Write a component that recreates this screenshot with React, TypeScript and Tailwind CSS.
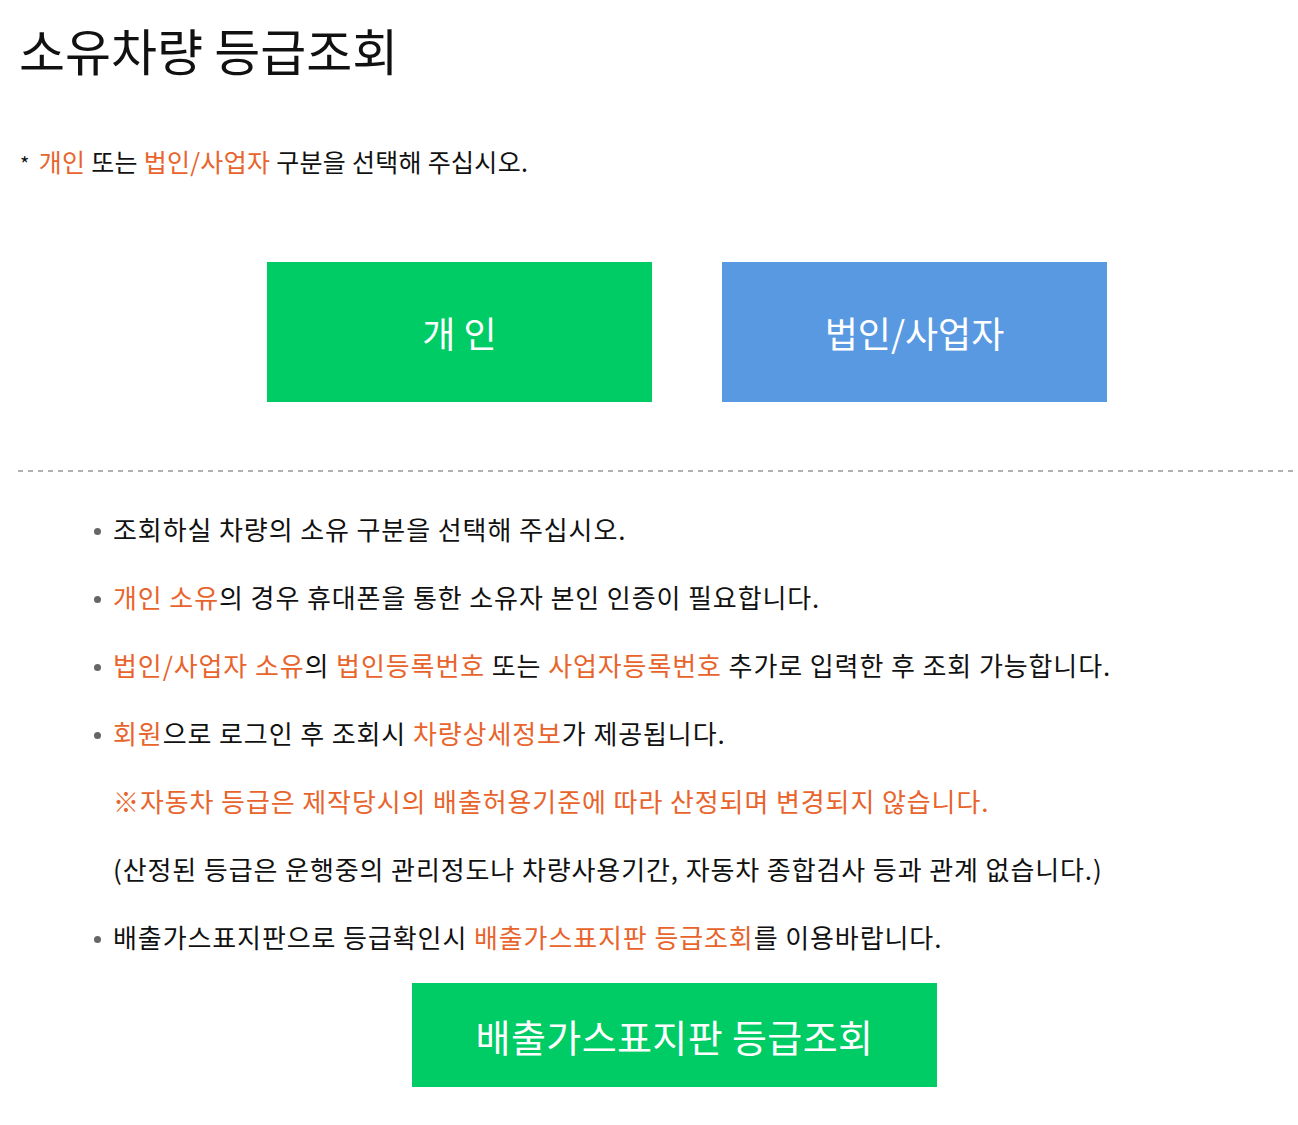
const orange = 'text-[#e8642c]'

function Bullet() {
  return <span className="inline-block w-[7px] h-[7px] rounded-full bg-[#666] mr-[12px] align-middle relative -top-[1px]" />
}

export default function App() {
  return (
    <div className="w-[1298px] min-h-[1125px] bg-white text-[#111] font-['Noto_Sans_CJK_KR','Noto_Sans',sans-serif]">
      {/* 제목 */}
      <h1 className="pl-[19px] pt-[15px] text-[50px] leading-[68px] font-normal">소유차량 등급조회</h1>

      <p className="pl-[20px] mt-[63px] text-[25px] leading-[30px] tracking-[0.3px]">
        <span className="text-[20px] mr-[9px]">*</span>
        <span className={orange}>개인</span> 또는 <span className={orange}>법인/사업자</span> 구분을 선택해 주십시오.
      </p>

      {/* 구분 선택 */}
      <div className="flex gap-[70px] pl-[267px] mt-[83px]">
        <button className="w-[385px] h-[140px] bg-[#00cc66] text-white text-[36px]">개 인</button>
        <button className="w-[385px] h-[140px] bg-[#5899e2] text-white text-[36px]">법인/사업자</button>
      </div>

      <div className="ml-[18px] mr-[4px] mt-[68px] h-[2px] bg-[repeating-linear-gradient(90deg,#b0b0b0_0_5px,transparent_5px_10px)]" />

      {/* 안내 */}
      <ul className="pl-[94px] pt-[23px] text-[26px] leading-[68px] tracking-[0.9px]">
        <li><Bullet />조회하실 차량의 소유 구분을 선택해 주십시오.</li>
        <li><Bullet /><span className={orange}>개인 소유</span>의 경우 휴대폰을 통한 소유자 본인 인증이 필요합니다.</li>
        <li>
          <Bullet /><span className={orange}>법인/사업자 소유</span>의 <span className={orange}>법인등록번호</span> 또는{' '}
          <span className={orange}>사업자등록번호</span> 추가로 입력한 후 조회 가능합니다.
        </li>
        <li><Bullet /><span className={orange}>회원</span>으로 로그인 후 조회시 <span className={orange}>차량상세정보</span>가 제공됩니다.</li>
        <li className={`pl-[19px] ${orange}`}>※자동차 등급은 제작당시의 배출허용기준에 따라 산정되며 변경되지 않습니다.</li>
        <li className="pl-[19px]">(산정된 등급은 운행중의 관리정도나 차량사용기간, 자동차 종합검사 등과 관계 없습니다.)</li>
        <li><Bullet />배출가스표지판으로 등급확인시 <span className={orange}>배출가스표지판 등급조회</span>를 이용바랍니다.</li>
      </ul>

      <div className="pl-[412px] mt-[12px]">
        <button className="w-[525px] h-[104px] bg-[#00cc66] text-white text-[38px] tracking-[0.4px]">배출가스표지판 등급조회</button>
      </div>
    </div>
  )
}
